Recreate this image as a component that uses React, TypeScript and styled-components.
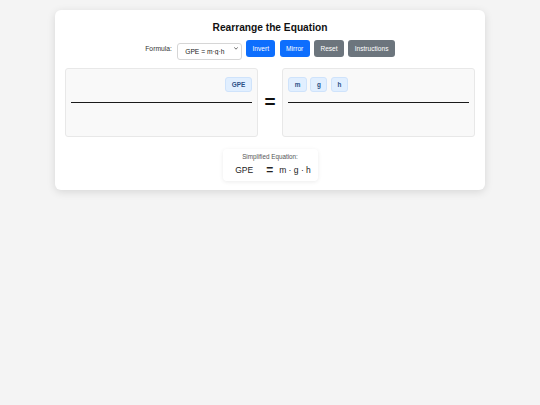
import React, { useState } from "react";
import styled, { createGlobalStyle } from "styled-components";

const Global = createGlobalStyle`
  html, body { margin: 0; padding: 0; background: #f4f4f4; }
  body { font-family: "Liberation Sans", Arial, sans-serif; color: #222; }
  * { box-sizing: border-box; }
`;

const Page = styled.div`
  padding: 10px 55px;
`;

const Card = styled.div`
  width: 430px;
  background: #fff;
  border-radius: 6px;
  box-shadow: 0 2px 8px rgba(0, 0, 0, 0.12);
  padding: 11.6px 10px 9px;
  display: flex;
  flex-direction: column;
  align-items: stretch;
`;

const Title = styled.h1`
  margin: 0 0 6.7px;
  font-size: 10.2px;
  line-height: 12px;
  font-weight: 700;
  text-align: center;
  color: #111;
`;

const Controls = styled.div`
  display: flex;
  justify-content: center;
  align-items: center;
  gap: 4.5px;
  height: 17px;
  margin-bottom: 11px;
`;

const Label = styled.label`
  font-size: 6.75px;
  color: #333;
  margin-right: 0.3px;
`;

const SelectWrap = styled.div`
  position: relative;
  width: 65px;
  height: 17px;
`;

const Select = styled.select`
  appearance: none;
  -webkit-appearance: none;
  width: 100%;
  height: 100%;
  font-family: "Liberation Sans", Arial, sans-serif;
  font-size: 6.7px;
  color: #222;
  padding: 0 10px 0 7.5px;
  border: 1px solid #d6d6d6;
  border-radius: 3px;
  background: #fff;
  outline: none;
`;

const Chevron = styled.svg`
  position: absolute;
  right: 3.5px;
  top: 7px;
  width: 4px;
  height: 3px;
  pointer-events: none;
`;

const Button = styled.button<{ $variant: "primary" | "secondary" }>`
  height: 17px;
  padding: 0 6.3px;
  border: none;
  border-radius: 3px;
  font-family: "Liberation Sans", Arial, sans-serif;
  font-size: 6.6px;
  color: #fff;
  background: ${(p) => (p.$variant === "primary" ? "#0d6efd" : "#6c757d")};
  cursor: pointer;
`;

const EquationRow = styled.div`
  display: flex;
  align-items: center;
  margin-bottom: 12.3px;
`;

const Side = styled.div`
  flex: 1;
  height: 68.4px;
  background: #f9f9f9;
  border: 1px solid #e8e8e8;
  border-radius: 3px;
  padding: 5px 5px;
  display: flex;
  flex-direction: column;
`;

const Numerator = styled.div<{ $align: "start" | "end" }>`
  height: 27.5px;
  padding-top: 3px;
  display: flex;
  align-items: flex-start;
  justify-content: ${(p) => (p.$align === "end" ? "flex-end" : "flex-start")};
  gap: 3.5px;
`;

const FractionBar = styled.div`
  height: 1.4px;
  background: #1a1a1a;
`;

const Denominator = styled.div`
  flex: 1;
`;

const Chip = styled.span`
  height: 14.5px;
  padding: 0 5.5px;
  display: inline-flex;
  align-items: center;
  background: #e1efff;
  border: 1px solid #cfe3fb;
  border-radius: 3px;
  font-size: 6.4px;
  font-weight: 700;
  color: #2a4f85;
`;

const Equals = styled.div`
  width: 24.6px;
  text-align: center;
  font-size: 19px;
  font-weight: 700;
  line-height: 1;
  color: #111;
  padding-bottom: 2px;
`;

const Simplified = styled.div`
  align-self: center;
  width: 95px;
  background: #fff;
  border-radius: 4px;
  box-shadow: 0 1px 4px rgba(0, 0, 0, 0.08);
  padding: 4.5px 6px 5px;
  display: flex;
  flex-direction: column;
  align-items: center;
`;

const SimplifiedLabel = styled.div`
  font-size: 6.3px;
  line-height: 7.5px;
  color: #555;
  margin-bottom: 3px;
`;

const Expression = styled.div`
  display: flex;
  align-items: center;
  height: 12px;
  font-size: 8.5px;
  color: #222;
  padding-left: 6px;
`;

const Lhs = styled.span`
  margin-right: 13px;
`;

const Eq = styled.span`
  font-size: 12px;
  font-weight: 700;
  margin-right: 6px;
`;

export default function App() {
  const [formula, setFormula] = useState("gpe");
  return (
    <>
      <Global />
      <Page>
        <Card>
          <Title>Rearrange the Equation</Title>
          <Controls>
            <Label htmlFor="formula">Formula:</Label>
            <SelectWrap>
              <Select id="formula" value={formula} onChange={(e) => setFormula(e.target.value)}>
                <option value="gpe">GPE = m·g·h</option>
              </Select>
              <Chevron viewBox="0 0 8 6">
                <path d="M1 1.2 L4 4.4 L7 1.2" fill="none" stroke="#333" strokeWidth="1.4" strokeLinecap="round" strokeLinejoin="round" />
              </Chevron>
            </SelectWrap>
            <Button $variant="primary">Invert</Button>
            <Button $variant="primary">Mirror</Button>
            <Button $variant="secondary">Reset</Button>
            <Button $variant="secondary">Instructions</Button>
          </Controls>
          <EquationRow>
            <Side>
              <Numerator $align="end">
                <Chip>GPE</Chip>
              </Numerator>
              <FractionBar />
              <Denominator />
            </Side>
            <Equals>=</Equals>
            <Side>
              <Numerator $align="start">
                <Chip>m</Chip>
                <Chip>g</Chip>
                <Chip>h</Chip>
              </Numerator>
              <FractionBar />
              <Denominator />
            </Side>
          </EquationRow>
          <Simplified>
            <SimplifiedLabel>Simplified Equation:</SimplifiedLabel>
            <Expression>
              <Lhs>GPE</Lhs>
              <Eq>=</Eq>
              <span>m · g · h</span>
            </Expression>
          </Simplified>
        </Card>
      </Page>
    </>
  );
}
